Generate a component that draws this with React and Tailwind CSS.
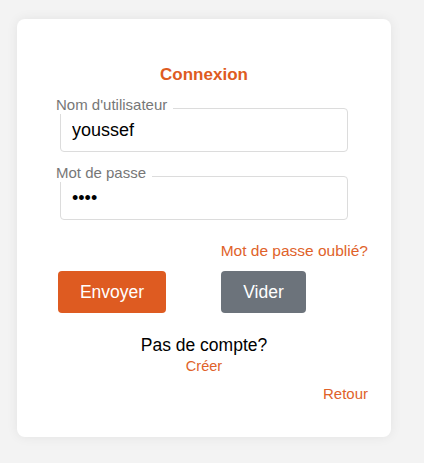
import React, { useState } from 'react';

const Field = ({ label, type, value, onChange, autoFocus, className }) => (
  <div className={`relative ml-[43px] w-[288px] ${className || ''}`}>
    <label className="absolute -top-[12px] -left-[4px] bg-white pr-[6px] text-[15px] leading-[18px] text-[#777]">
      {label}
    </label>
    <input
      type={type}
      value={value}
      onChange={onChange}
      autoFocus={autoFocus}
      className="block w-full h-[44px] border border-[#dcdcdc] rounded-[4px] pl-[11px] text-[18px] text-black outline-none caret-black"
    />
  </div>
);

const App = () => {
  const [username, setUsername] = useState('youssef');
  const [password, setPassword] = useState('abcd');

  return (
    <div className="min-h-screen bg-[#f3f3f3] pt-[19px] pl-[17px] font-['Liberation_Sans',Arial,sans-serif]">
      <div className="w-[374px] h-[418px] bg-white rounded-[8px] shadow-[0_0_12px_rgba(0,0,0,0.07)] pt-[46px]">
        <h2 className="text-center text-[17px] leading-[20px] font-bold text-[#de5b21]">Connexion</h2>

        <form onSubmit={(e) => e.preventDefault()}>
          <Field
            label="Nom d'utilisateur"
            type="text"
            value={username}
            onChange={(e) => setUsername(e.target.value)}
            className="mt-[23px]"
          />
          <Field
            label="Mot de passe"
            type="password"
            value={password}
            onChange={(e) => setPassword(e.target.value)}
            autoFocus
            className="mt-[24px]"
          />

          <div className="mt-[22px] pr-[23px] text-right text-[15.5px] leading-[18px]">
            <a href="#" className="text-[#e0622a]">Mot de passe oublié?</a>
          </div>

          {/* Buttons */}
          <div className="mt-[11px] flex pl-[41px]">
            <button
              type="submit"
              className="w-[108px] h-[42px] rounded-[4px] bg-[#de5b21] text-white text-[17.5px]"
            >
              Envoyer
            </button>
            <button
              type="button"
              onClick={() => { setUsername(''); setPassword(''); }}
              className="ml-[55px] w-[85px] h-[42px] rounded-[4px] bg-[#6c737b] text-white text-[17.5px]"
            >
              Vider
            </button>
          </div>
        </form>

        <div className="mt-[22px] text-center">
          <p className="text-[17.5px] leading-[20px] text-black">Pas de compte?</p>
          <div className="mt-[3px] text-[14.5px] leading-[16px]">
            <a href="#" className="text-[#e0622a]">Créer</a>
          </div>
        </div>

        <div className="mt-[11px] pr-[23px] text-right text-[15px] leading-[18px]">
          <a href="#" className="text-[#e0622a]">Retour</a>
        </div>
      </div>
    </div>
  );
};

export default App;
